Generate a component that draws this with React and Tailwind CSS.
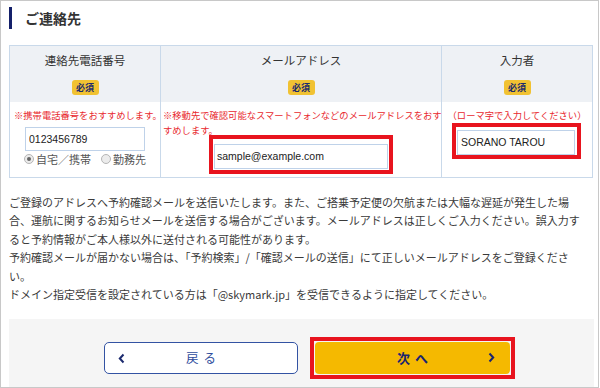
const jp = { fontFamily: '"Noto Sans CJK JP", "Noto Sans", sans-serif' }
const latin = { fontFamily: '"Liberation Sans", Arial, sans-serif' }

function Badge() {
  return (
    <span className="inline-flex items-center justify-center w-[27px] h-[15px] rounded-[3px] bg-[#f1c232] text-[#1c2a6e] text-[9px] font-bold leading-none">
      必須
    </span>
  )
}

function Radio({ checked, label }) {
  return (
    <span className="flex items-center gap-[2px]">
      <span className="w-[10px] h-[10px] rounded-full border border-[#b5b5b5] bg-[#ececec] flex items-center justify-center">
        {checked && <span className="w-[4px] h-[4px] rounded-full bg-[#666]" />}
      </span>
      <span>{label}</span>
    </span>
  )
}

function Chevron({ dir, color }) {
  return (
    <svg width="7" height="11" viewBox="0 0 7 11">
      {dir === 'left' ? (
        <polyline points="5.5,1.5 1.8,5.5 5.5,9.5" fill="none" stroke={color} strokeWidth="2" />
      ) : (
        <polyline points="1.5,1.5 5.2,5.5 1.5,9.5" fill="none" stroke={color} strokeWidth="2" />
      )}
    </svg>
  )
}

export default function App() {
  return (
    <div className="w-[599px] h-[388px] bg-white border border-[#c8c8c8] overflow-hidden text-[#333]" style={jp}>
      <div className="pl-[8px] pt-[6px] w-[592px]">
        {/* heading */}
        <div className="flex items-center h-[22px]">
          <div className="w-[3px] h-[22px] bg-[#14206a]" />
          <h2 className="ml-[13px] text-[14px] font-bold text-[#333] leading-none">ご連絡先</h2>
        </div>

        {/* contact table */}
        <div className="mt-[16px] w-[584px] border border-[#c9d9ea] grid grid-cols-[151px_281px_150px]">
          <div className="bg-[#eef1f5] border-r border-[#c9d9ea] pt-[7px] pb-[6px] flex flex-col items-center">
            <div className="text-[11.5px] leading-[14px] h-[14px]">連絡先電話番号</div>
            <div className="mt-[5px]"><Badge /></div>
          </div>
          <div className="bg-[#eef1f5] border-r border-[#c9d9ea] pt-[7px] pb-[6px] flex flex-col items-center">
            <div className="text-[11.5px] leading-[14px] h-[14px]">メールアドレス</div>
            <div className="mt-[5px]"><Badge /></div>
          </div>
          <div className="bg-[#eef1f5] pt-[7px] pb-[6px] flex flex-col items-center">
            <div className="text-[11.5px] leading-[14px] h-[14px]">入力者</div>
            <div className="mt-[5px]"><Badge /></div>
          </div>

          {/* phone */}
          <div className="border-r border-[#c9d9ea] pt-[6px] pb-[8px] px-[4px] flex flex-col items-center">
            <p className="text-[9.3px] leading-[15px] text-[#e8282e] whitespace-nowrap self-start">※携帯電話番号をおすすめします。</p>
            <input
              readOnly
              value="0123456789"
              className="mt-[4px] w-[120px] h-[24px] border border-[#bfd2e9] px-[3px] text-[10.5px] text-[#222] outline-none"
              style={latin}
            />
            <div className="mt-[1px] h-[14px] flex items-center justify-center gap-[10px] text-[11px] text-[#555]">
              <Radio checked label="自宅／携帯" />
              <Radio label="勤務先" />
            </div>
          </div>

          {/* email */}
          <div className="border-r border-[#c9d9ea] pt-[6px] pb-[8px] px-[2px] flex flex-col items-center">
            <p className="text-[9.3px] leading-[15px] text-[#e8282e] whitespace-nowrap self-start">
              ※移動先で確認可能なスマートフォンなどのメールアドレスをおす<br />すめします。
            </p>
            <div className="relative mt-[3px]">
              <input
                readOnly
                value="sample@example.com"
                className="w-[174px] h-[25px] border border-[#bfd2e9] px-[2px] text-[10.5px] text-[#222] outline-none"
                style={latin}
              />
              <span className="absolute -left-[5px] -right-[5px] -top-[6px] -bottom-[5px] border-4 border-[#e8141e] pointer-events-none" />
            </div>
          </div>

          {/* name */}
          <div className="pt-[6px] pb-[8px] px-[4px] flex flex-col items-center">
            <p className="text-[9.3px] leading-[15px] text-[#e8282e] whitespace-nowrap">（ローマ字で入力してください）</p>
            <div className="relative mt-[4px] ml-[-2px]">
              <input
                readOnly
                value="SORANO TAROU"
                className="w-[118px] h-[25px] border border-[#bfd2e9] px-[3px] text-[10.5px] text-[#222] outline-none"
                style={latin}
              />
              <span className="absolute -left-[5px] -right-[6px] -top-[4px] -bottom-[4px] border-4 border-[#e8141e] pointer-events-none" />
            </div>
          </div>
        </div>

        {/* notice */}
        <p className="mt-[15px] text-[11px] leading-[18.6px] text-[#3a3a3a] whitespace-nowrap">
          ご登録のアドレスへ予約確認メールを送信いたします。また、ご搭乗予定便の欠航または大幅な遅延が発生した場<br />
          合、運航に関するお知らせメールを送信する場合がございます。メールアドレスは正しくご入力ください。誤入力す<br />
          ると予約情報がご本人様以外に送付される可能性があります。<br />
          予約確認メールが届かない場合は、「予約検索」/「確認メールの送信」にて正しいメールアドレスをご登録くださ<br />
          い。<br />
          ドメイン指定受信を設定されている方は「@skymark.jp」を受信できるように指定してください。
        </p>

        {/* buttons */}
        <div className="mt-[15px] w-[585px] h-[75px] bg-[#f5f5f5] pl-[95px] pt-[23px] flex items-start">
          <button className="relative w-[194px] h-[32px] bg-white border border-[#3353a3] rounded-[5px] flex items-center justify-center gap-[5px] text-[12.5px] text-[#2e4c9c]">
            <span className="absolute left-[13px] top-[10px]"><Chevron dir="left" color="#1c2a6e" /></span>
            <span>戻</span><span>る</span>
          </button>
          <div className="relative ml-[17px]">
            <button className="relative w-[195px] h-[32px] bg-[#f5b900] rounded-[4px] flex items-center justify-center gap-[5px] text-[13px] font-bold text-[#1a2470]">
              <span>次</span><span>へ</span>
              <span className="absolute right-[15px] top-[10px]"><Chevron dir="right" color="#1a2470" /></span>
            </button>
            <span className="absolute -inset-[5px] border-4 border-[#e8141e] pointer-events-none" />
          </div>
        </div>
      </div>
    </div>
  )
}
